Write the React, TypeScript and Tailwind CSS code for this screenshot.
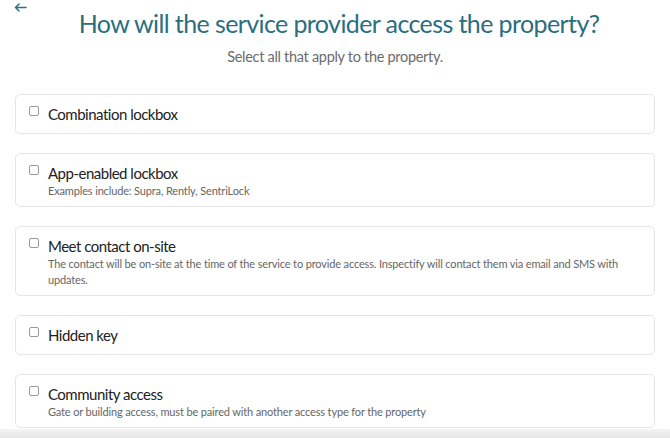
const options = [
  { label: 'Combination lockbox' },
  { label: 'App-enabled lockbox', desc: 'Examples include: Supra, Rently, SentriLock' },
  {
    label: 'Meet contact on-site',
    desc: 'The contact will be on-site at the time of the service to provide access. Inspectify will contact them via email and SMS with updates.',
  },
  { label: 'Hidden key' },
  { label: 'Community access', desc: 'Gate or building access, must be paired with another access type for the property' },
];

export default function App() {
  return (
    <div className="w-[670px] h-[438px] overflow-hidden bg-white font-['Lato',sans-serif] flex flex-col">
      <div className="pl-[14px] pt-[3px] h-[12px] text-[#2b6e7e]">
        <svg width="13" height="9" viewBox="0 0 13 9" fill="none" stroke="currentColor" strokeWidth="1.5" strokeLinecap="round" strokeLinejoin="round">
          <path d="M12 4.5H1.5M5 1L1.5 4.5L5 8" />
        </svg>
      </div>
      <h1 className="text-center text-[25px] leading-[22px] text-[#2b6e7e] tracking-[-0.6px] pl-[8px]">
        How will the service provider access the property?
      </h1>
      <p className="text-center text-[14.5px] leading-[20px] mt-[13px] text-[#6b6b6b] tracking-[-0.3px]">
        Select all that apply to the property.
      </p>
      <div className="mt-[27px] px-[15px] flex flex-col gap-[19px]">
        {options.map((o) => (
          <label
            key={o.label}
            className="flex gap-[9px] border border-[#e5e5e5] rounded-[5px] pl-[13px] pr-4 pt-[10px] pb-[7px] min-h-[40px]"
          >
            <span className="mt-[1px] w-[10px] h-[10px] shrink-0 rounded-[2px] border border-[#999] bg-white" />
            <div className="flex-1 min-w-0">
              <div className="text-[15px] leading-[19px] text-[#222] tracking-[-0.5px]">{o.label}</div>
              {o.desc && (
                <div className="text-[11px] leading-[16px] text-[#666] tracking-[-0.15px]">{o.desc}</div>
              )}
            </div>
          </label>
        ))}
      </div>
      <div className="fixed left-0 right-0 top-[429px] h-[9px] bg-gradient-to-b from-[#f4f4f4] to-[#e6e6e6]" />
    </div>
  );
}
